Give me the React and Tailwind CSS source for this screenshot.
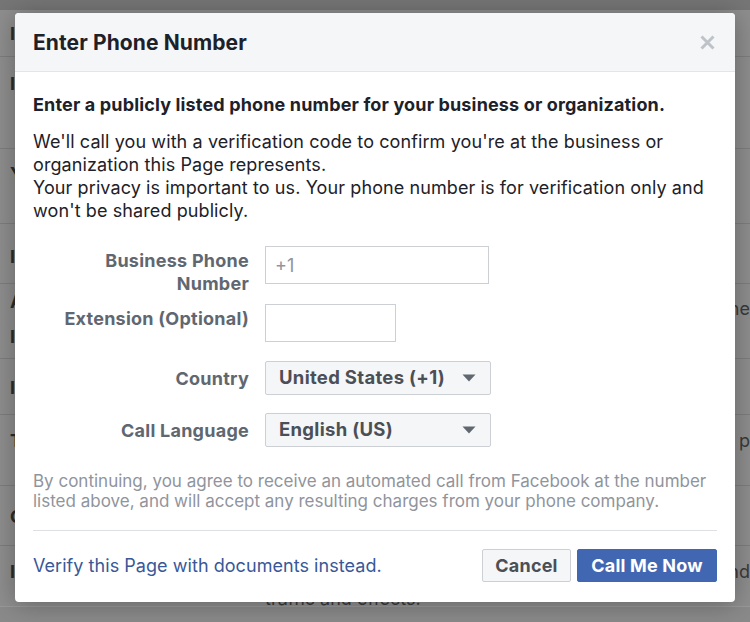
import React from "react";

const font = { fontFamily: "Inter, 'Liberation Sans', sans-serif" };

function Caret() {
  return (
    <svg width="14" height="8" viewBox="0 0 14 8" className="shrink-0">
      <path d="M0.5 0.5 L13.5 0.5 L7 7.5 Z" fill="#606770" />
    </svg>
  );
}

function BgRow({ h, left, leftTop, left2, right, rightTop }) {
  return (
    <div
      className="relative flex items-start justify-between border-b border-[#7e7e7e] text-[18px] leading-[23px] text-[#2c2c2c]"
      style={{ height: h }}
    >
      <div className="pl-[10px] font-bold" style={{ paddingTop: leftTop }}>
        <div>{left}</div>
        {left2 ? <div className="mt-[12px]">{left2}</div> : null}
      </div>
      {right ? (
        <span className="text-[#3a3a3a] whitespace-nowrap" style={{ paddingTop: rightTop }}>
          {right}
        </span>
      ) : null}
    </div>
  );
}

export default function App() {
  return (
    <div className="relative w-[750px] h-[622px] overflow-hidden bg-[#8e8e8e]" style={font}>
      {/* background page (dimmed) */}
      <div className="flex flex-col">
        <div className="h-[10px] bg-[#767676]" />
        <BgRow h={47} left="I" leftTop={12} />
        <BgRow h={92} left="I" leftTop={15} />
        <BgRow h={75} left="Y" leftTop={13} />
        <BgRow h={60} left="I" leftTop={21} />
        <BgRow h={75} left="A" left2="I" leftTop={6} right="the" rightTop={13} />
        <BgRow h={56} left="I" leftTop={17} />
        <BgRow h={71} left="T" leftTop={14} right="is p" rightTop={14} />
        <BgRow h={60} left="C" leftTop={19} />
        <div className="relative h-[67px] text-[18px] leading-[23px] text-[#2c2c2c]">
          <div className="flex justify-between">
            <div className="pl-[10px] pt-[14px] font-bold">I</div>
            <div className="pt-[14px] text-[#3a3a3a]">and</div>
          </div>
          <div className="pl-[265px] pt-[4px] text-[#3a3a3a]">traffic and effects.</div>
        </div>
      </div>
      <div className="absolute left-0 right-0 bottom-0 h-[16px] bg-[#8a8a8a] border-t border-[#999999]" />

      {/* modal */}
      <div className="absolute left-[15px] top-[13px] w-[720px] h-[589px] rounded-[4px] bg-white shadow-[0_2px_26px_rgba(0,0,0,0.3)] overflow-hidden">
        <div className="h-[59px] bg-[#f5f6f7] border-b border-[#e5e5e5] flex items-center justify-between pl-[18px] pr-[20px]">
          <div className="text-[21px] font-bold text-[#1d2129] tracking-[0.1px] pt-[1px]">Enter Phone Number</div>
          <svg width="15" height="15" viewBox="0 0 15 15">
            <path d="M1.5 1.5 L13.5 13.5 M13.5 1.5 L1.5 13.5" stroke="#bec3c9" strokeWidth="3" />
          </svg>
        </div>

        <div className="px-[18px] pt-[21px]">
          <div className="text-[18px] leading-[23px] font-bold text-[#1d2129] tracking-[0.15px]">
            Enter a publicly listed phone number for your business or organization.
          </div>
          <div className="mt-[14px] text-[18px] leading-[23px] text-[#1d2129] tracking-[0.1px]">
            <div>We'll call you with a verification code to confirm you're at the business or organization this Page represents.</div>
            <div>Your privacy is important to us. Your phone number is for verification only and won't be shared publicly.</div>
          </div>

          <div className="mt-[24px] flex flex-col text-[18px]">
            <div className="flex gap-[16px] items-start">
              <div className="w-[216px] text-right font-bold text-[#606770] leading-[23px] pt-[3px] tracking-[0.25px]">
                Business Phone
                <br />
                Number
              </div>
              <div className="w-[224px] h-[38px] border border-[#ccd0d5] flex items-center pl-[9px] text-[#90949c]">+1</div>
            </div>
            <div className="mt-[9px] flex gap-[16px] items-start">
              <div className="w-[216px] text-right font-bold text-[#606770] leading-[23px] pt-[3px] tracking-[0.25px]">Extension (Optional)</div>
              <div className="w-[131px] h-[38px] border border-[#ccd0d5]" />
            </div>
            <div className="mt-[19px] flex gap-[16px] items-center">
              <div className="w-[216px] text-right font-bold text-[#606770] leading-[23px] tracking-[0.25px]">Country</div>
              <div className="w-[226px] h-[34px] border border-[#ccd0d5] rounded-[2px] bg-[#f5f6f7] flex items-center justify-between pl-[13px] pr-[14px] font-bold text-[#4b4f56] text-[18.5px] tracking-[0.3px]">
                <span>United States (+1)</span>
                <Caret />
              </div>
            </div>
            <div className="mt-[18px] flex gap-[16px] items-center">
              <div className="w-[216px] text-right font-bold text-[#606770] leading-[23px] tracking-[0.25px]">Call Language</div>
              <div className="w-[226px] h-[34px] border border-[#ccd0d5] rounded-[2px] bg-[#f5f6f7] flex items-center justify-between pl-[13px] pr-[14px] font-bold text-[#4b4f56] text-[18.5px] tracking-[0.3px]">
                <span>English (US)</span>
                <Caret />
              </div>
            </div>
          </div>

          <div className="mt-[24px] text-[17px] leading-[20px] text-[#90949c]">
            By continuing, you agree to receive an automated call from Facebook at the number listed above, and will accept any resulting charges from your phone company.
          </div>

          <div className="mt-[19px] border-t border-[#dddfe2]" />

          <div className="mt-[18px] flex items-center justify-between">
            <div className="text-[18px] text-[#385898] tracking-[0.05px]">Verify this Page with documents instead.</div>
            <div className="flex gap-[6px]">
              <div className="h-[33px] w-[89px] rounded-[2px] border border-[#ccd0d5] bg-[#f5f6f7] flex items-center justify-center text-[18px] font-bold text-[#4b4f56] tracking-[0.2px]">
                Cancel
              </div>
              <div className="h-[33px] w-[140px] rounded-[2px] border border-[#4267b2] bg-[#4267b2] flex items-center justify-center text-[18px] font-bold text-white tracking-[0.2px]">
                Call Me Now
              </div>
            </div>
          </div>
        </div>
      </div>
    </div>
  );
}
